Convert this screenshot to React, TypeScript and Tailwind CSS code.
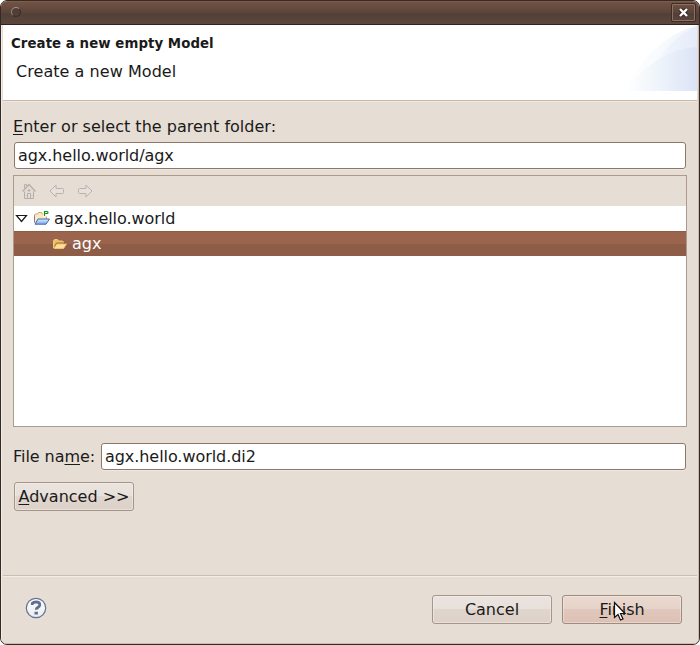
import React from "react";

function HomeIcon() {
  return (
    <svg width="16" height="16" viewBox="0 0 16 16" fill="none" stroke="#b7b0aa">
      <path d="M3.500 8v7.500h9V8L8 3.500z" fill="#e2dcd6" stroke="none" />
      <path d="M3.500 5V1.500h2v1.500" />
      <path d="M1.500 8.500L8 1.500l6.500 7" strokeWidth="1.400" />
      <path d="M3.500 8.500v7h9v-7" />
      <path d="M6.500 15.500v-5h3v5M6.500 7.500h3M8 6v3" />
      <path d="M4.500 12.500h1M10.500 12.500h1" stroke="#c6bfb9" />
    </svg>
  );
}

function ArrowIcon({ flip }: { flip?: boolean }) {
  return (
    <svg width="16" height="14" viewBox="0 0 16 14" className={flip ? "-scale-x-100" : ""}>
      <path d="M1 7L7 1V4.500H13.500q1 0 1 1v3q0 1-1 1H7V13z" fill="#e8e1db" stroke="#bab3ad" />
    </svg>
  );
}

function ProjectIcon() {
  return (
    <svg width="17" height="16" viewBox="0 0 17 16" className="-ml-px mb-px mr-px">
      <defs>
        <linearGradient id="blueFolder" x2="0" y2="1">
          <stop stopColor="#e2efff" />
          <stop offset="1" stopColor="#78a5ea" />
        </linearGradient>
      </defs>
      <path d="M1.500 13V5L2.500 4H4.500L5.500 2.500h3L9.500 4H13.500V9" fill="#fbeabb" stroke="#cfa565" />
      <path d="M1.500 12V5.500" stroke="#8c7aa0" />
      <path d="M2 14.200L5 9h11.500l-3.500 5.200z" fill="url(#blueFolder)" stroke="#4368b5" />
      <path d="M10 0h6.500v6.500H10z" fill="#fff" />
      <path d="M11.500 6V1.500h2.500q1 0 1 1t-1 1h-2" fill="none" stroke="#168f22" strokeWidth="1.200" />
    </svg>
  );
}

function FolderIcon() {
  return (
    <svg width="16" height="14" viewBox="0 0 16 14">
      <path d="M1.500 11V3.500L2.500 2.500h3L6.500 4H10.500l1 1v1.500" fill="#efbd62" stroke="#f4c875" />
      <path d="M2 11.500L5 7H14.500l-3 4.500z" fill="#ffe09a" stroke="#f2c268" />
      <path d="M2.500 9.500l2-3.500h9" fill="none" stroke="#895c3f" strokeWidth="0.800" />
    </svg>
  );
}

function HeaderArt() {
  return (
    <svg width="75" height="66" viewBox="0 0 75 66" className="block">
      <defs>
        <linearGradient id="outerArc">
          <stop stopColor="#fff" />
          <stop offset="0.500" stopColor="#f8fafd" />
          <stop offset="1" stopColor="#edf2fc" />
        </linearGradient>
        <linearGradient id="lobe">
          <stop stopColor="#f4f7fd" />
          <stop offset="1" stopColor="#e5ebf9" />
        </linearGradient>
        <linearGradient id="innerArc">
          <stop stopColor="#fff" />
          <stop offset="0.400" stopColor="#f1f6fb" />
          <stop offset="0.700" stopColor="#e6edf9" />
          <stop offset="1" stopColor="#dce3f6" />
        </linearGradient>
      </defs>
      <path d="M3 66Q28 14 75 0v66z" fill="url(#outerArc)" />
      <path d="M34 40Q46 14 75 1v22Q50 26 34 40z" fill="url(#lobe)" />
      <path d="M3 66Q35 24 75 22v44z" fill="url(#innerArc)" />
    </svg>
  );
}

function HelpIcon() {
  return (
    <svg width="22" height="22" viewBox="0 0 22 22" className="mb-[3px]">
      <defs>
        <linearGradient id="helpFill" x2="0" y2="1">
          <stop stopColor="#fff" />
          <stop offset="1" stopColor="#ebeaec" />
        </linearGradient>
      </defs>
      <circle cx="11" cy="11" r="9.700" fill="url(#helpFill)" stroke="#5e7395" strokeWidth="1.200" />
      <path d="M7.300 8V6.300Q8.500 5 11 5q3.800 0 3.800 2.800 0 1.500-2 2.700-1.600 1-1.600 2.300" fill="none" stroke="#62708f" strokeWidth="2.800" />
      <path d="M9.500 14.700h3.400v2.800H9.500z" fill="#62708f" />
    </svg>
  );
}

function Field({ value, className }: { value: string; className: string }) {
  return (
    <div className={`mr-px flex h-[27px] items-center rounded-[3px] border border-[#8e7768] bg-white pl-[3px] tracking-[-0.060px] shadow-[0_1px_0_#eee9e5] ${className}`}>
      {value}
    </div>
  );
}

const buttonBase = "flex h-[29px] w-[120px] items-center justify-center rounded-[3px] border shadow-[inset_0_0_0_1px_#ffffff55]";
const plainButton = "border-[#a6968a] bg-[linear-gradient(#ebe3de,#e8e0da_48%,#e0d6ce_50%,#ddd1c8)]";

export default function App() {
  return (
    <div className="h-[645px] w-[700px] bg-white font-['DejaVu_Sans',sans-serif] text-[16px] leading-5 text-[#1a1a1a]">
      <div className="flex h-full flex-col overflow-hidden rounded-[7px] border border-[#362a25] bg-[#e6ddd4]">
        <div className="flex h-6 shrink-0 items-center justify-between border-b border-[#30221e] bg-[linear-gradient(#84685e_0px,#72523f_1px,#704f43_3px,#5a443a_12px,#513f36_13px,#5c473d)] pl-[10px] pr-[3px]">
          <div className="mb-px size-[10px] rounded-full border border-[#382b26] border-t-[#a3948d] border-l-[#988780] bg-[#513f37]" />
          <div className="flex h-[19px] w-[25px] items-center justify-center rounded-[2px] border border-[#3d2b24] shadow-[inset_0_0_0_1px_#8b7166]">
            <svg width="13" height="11" viewBox="0 0 13 11" className="mb-px mr-px">
              <path d="M3 2l7 7M10 2L3 9" stroke="#392a24" strokeWidth="4.500" />
              <path d="M3 2l7 7M10 2L3 9" stroke="#fff" strokeWidth="2.400" />
            </svg>
          </div>
        </div>
        <div className="flex grow flex-col border-x border-b border-[#c8bbb0] border-l-[#f1ece8] px-px">
          <div className="flex h-[76px] shrink-0 justify-between border-b border-[#cbb8a7] bg-white">
            <div className="pl-2 pt-[9px]">
              <div className="text-[13.330px] font-bold tracking-[0.060px]">Create a new empty Model</div>
              <div className="mt-2 pl-[5px] tracking-[0.050px]">Create a new Model</div>
            </div>
            <HeaderArt />
          </div>
          <div className="flex grow flex-col border-t border-[#f0e9e3] pl-[10px] pr-[10px] pt-[15px]">
            <div className="h-5 tracking-[0.015px]"><span className="underline underline-offset-2">E</span>nter or select the parent folder:</div>
            <Field value="agx.hello.world/agx" className="ml-px mt-[5px]" />
            <div className="mt-[6px] flex h-[252px] flex-col border border-[#ac9a8b] bg-white">
              <div className="flex h-[30px] items-center gap-3 bg-[#e6ddd4] pl-[7px]">
                <HomeIcon />
                <ArrowIcon />
                <ArrowIcon flip />
              </div>
              <div className="flex h-[25px] items-center">
                <svg width="20" height="16" viewBox="0 0 20 16"><path d="M2.500 4.500h10l-5 6z" fill="#fff" stroke="#191919" strokeWidth="1.200" /></svg>
                <ProjectIcon />
                <span className="pl-[3px] tracking-[-0.050px]">agx.hello.world</span>
              </div>
              <div className="flex h-[25px] items-center border-t border-[#8e5b46] bg-[linear-gradient(#9b644c_0%,#9b644c_48%,#8d5d48_50%)] pl-[38px] text-white">
                <FolderIcon />
                <span className="pl-1">agx</span>
              </div>
            </div>
            <div className="mt-4 flex items-center">
              <span className="w-[88px] whitespace-nowrap tracking-[-0.050px]">File na<span className="underline underline-offset-2">m</span>e:</span>
              <Field value="agx.hello.world.di2" className="grow" />
            </div>
            <button className={`ml-px mt-3 ${buttonBase} ${plainButton}`}><span><span className="underline underline-offset-2">A</span>dvanced &gt;&gt;</span></button>
          </div>
          <div className="flex h-[68px] shrink-0 items-center border-t border-[#cbbdb1] pl-[22px] pr-[15px] shadow-[inset_0_1px_0_#f3ede8]">
            <HelpIcon />
            <div className="ml-auto flex gap-[10px]">
              <button className={`${buttonBase} ${plainButton}`}>Cancel</button>
              <button className={`relative ${buttonBase} border-[#9e8b80] bg-[linear-gradient(#ead8cf,#e6d2c8_48%,#e0c7bc_50%,#ddc0b3)]`}>
                <span className="tracking-[-0.100px]"><span className="underline underline-offset-2">F</span>inish</span>
                <svg width="14" height="21" viewBox="0 0 14 21" className="absolute left-[50px] top-[5px]">
                  <path d="M1.500 1.500v15l3.500-3 2.500 5.500 2.500-1-2.500-5.500h4.500z" fill="#fff" stroke="#111" strokeWidth="1.200" />
                </svg>
              </button>
            </div>
          </div>
        </div>
      </div>
    </div>
  );
}
